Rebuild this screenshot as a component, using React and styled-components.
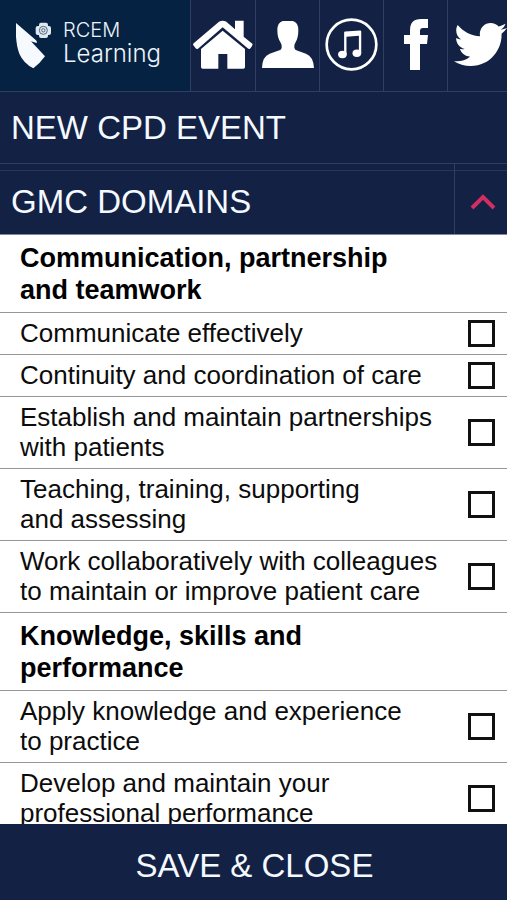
import React, {useState} from 'react';
import styled, {createGlobalStyle} from 'styled-components';
import {FaTwitter} from 'react-icons/fa';

const navy = '#132144';
const line = '#303e62';

const GlobalStyle = createGlobalStyle`
    * {
        box-sizing: border-box;
    }

    body {
        margin: 0;
        font-family: "Liberation Sans", Arial, sans-serif;
        color: #0c0c0c;
        background: #ffffff;
    }
`;

const Page = styled.div`
    display: flex;
    flex-direction: column;
    height: 100vh;
`;

const Header = styled.header`
    display: grid;
    grid-template-columns: 190fr 65fr 64fr 64fr 64fr 60fr;
    flex: none;
    height: 92px;
    background: ${navy};
    border-bottom: 1px solid ${line};
`;

const Logo = styled.a`
    display: flex;
    align-items: flex-start;
    gap: 12px;
    padding: 20px 0 0 16px;
    color: #eef4fa;
    text-decoration: none;
    background: #052242;

    svg {
        flex: none;
        margin-top: 1px;
    }
`;

const LogoText = styled.span`
    display: flex;
    flex-direction: column;
    font-family: Inter, sans-serif;
    font-weight: 300;
`;

const LogoTop = styled.span`
    font-size: 20px;
    line-height: 20px;
`;

const LogoBottom = styled.span`
    font-size: 24px;
    line-height: 28px;
`;

const NavLink = styled.a`
    display: flex;
    align-items: center;
    justify-content: ${(props) => props.$align || 'center'};
    padding-bottom: 3px;
    border-left: 1px solid ${line};
    color: #ffffff;

    svg {
        flex: none;
    }
`;

const PageTitle = styled.h1`
    display: flex;
    align-items: center;
    flex: none;
    height: 72px;
    margin: 0;
    padding-left: 11px;
    font-size: 33px;
    font-weight: 400;
    color: #f4f9ff;
    background: ${navy};
    border-bottom: 1px solid ${line};
`;

const SectionBar = styled.div`
    display: grid;
    grid-template-columns: 1fr 53px;
    flex: none;
    height: 71px;
    color: #f4f9ff;
    background: linear-gradient(#283657, #283657) 0 6px / 100% 1px no-repeat ${navy};
    border-bottom: 1px solid #8088a0;
`;

const SectionTitle = styled.h2`
    align-self: center;
    margin: 0;
    padding: 6px 0 0 11px;
    font-size: 33px;
    font-weight: 400;
`;

const ToggleButton = styled.button`
    display: flex;
    align-items: center;
    justify-content: center;
    padding: 6px 0 0 4px;
    border: 0;
    border-left: 1px solid ${line};
    background: none;
    cursor: pointer;

    svg {
        transform: ${(props) => (props.$open ? 'none' : 'rotate(180deg)')};
    }
`;

const List = styled.main`
    flex: 1;
    min-height: 0;
    overflow-y: auto;
    scrollbar-width: none;
`;

const GroupTitle = styled.h3`
    margin: 0;
    padding: 7px 20px 6px;
    font-size: 27px;
    font-weight: 700;
    line-height: 32px;
    white-space: pre-line;
    color: #000000;
    border-bottom: 1px solid #969696;
`;

const Row = styled.label`
    display: flex;
    align-items: center;
    justify-content: space-between;
    padding: 5px 12px 6px 20px;
    font-size: 26px;
    line-height: 30px;
    white-space: pre-line;
    border-bottom: 1px solid #969696;
`;

const Checkbox = styled.input`
    flex: none;
    appearance: none;
    width: 27px;
    height: 27px;
    margin: 0;
    border: 3px solid #111111;
    background: #ffffff;

    &:checked {
        background: #111111;
        box-shadow: inset 0 0 0 3px #ffffff;
    }
`;

const SaveButton = styled.button`
    flex: none;
    height: 76px;
    padding: 8px 0 0 2px;
    border: 0;
    font-family: inherit;
    font-size: 33px;
    color: #f4f9ff;
    background: ${navy};
    cursor: pointer;
`;

const groups = [
    {
        title: 'Communication, partnership\nand teamwork',
        items: [
            'Communicate effectively',
            'Continuity and coordination of care',
            'Establish and maintain partnerships\nwith patients',
            'Teaching, training, supporting\nand assessing',
            'Work collaboratively with colleagues\nto maintain or improve patient care',
        ],
    },
    {
        title: 'Knowledge, skills and\nperformance',
        items: [
            'Apply knowledge and experience\nto practice',
            'Develop and maintain your\nprofessional performance',
        ],
    },
];

const LogoMark = () => (
    <svg width="35" height="48" viewBox="0 0 105 144" aria-hidden="true">
        <path d="M0 6 L60 58 Q64 62 62 66 L45 61 L87 106 Q72 127 52 142 Q22 126 10 98 Q-3 65 0 6Z" fill="#f6fafe"/>
        <rect x="69" y="5" width="27" height="46" rx="6" fill="#dfe8ef"/>
        <rect x="59" y="15" width="46" height="27" rx="6" fill="#dfe8ef"/>
        <circle cx="82" cy="28" r="12" fill="none" stroke="#52657b" strokeWidth="3"/>
        <circle cx="82" cy="28" r="5" fill="none" stroke="#52657b" strokeWidth="3"/>
    </svg>
);

const HomeIcon = () => (
    <svg width="60" height="49" viewBox="0 0 180 147" fill="currentColor" aria-hidden="true">
        <path d="M2 70 L78 5 Q89 -1 100 5 L126 28 V2 H152 V50 L178 71 Q181 75 171 86 Q168 88 164 85 L89 22 L15 86 Q11 89 8 85 L1 76 Q-1 73 2 70Z"/>
        <path d="M89 32 L156 87 V142 Q156 146 151 146 H103 V102 H76 V146 H29 Q24 146 24 141 V87Z"/>
    </svg>
);

const PersonIcon = () => (
    <svg width="52" height="47" viewBox="0 0 156 141" fill="currentColor" aria-hidden="true">
        <path d="M62 0 H93 Q109 5 109 27 Q109 50 101 63 Q96 71 97 80 Q98 87 107 89 L132 98 Q154 106 156 141 H0 Q1 106 23 98 L48 89 Q58 87 59 80 Q60 71 55 63 Q46 50 46 27 Q46 5 62 0Z"/>
    </svg>
);

const MusicIcon = () => (
    <svg width="53" height="53" viewBox="0 0 158 158" fill="currentColor" aria-hidden="true">
        <circle cx="79" cy="79" r="74" fill="none" stroke="currentColor" strokeWidth="8"/>
        <path d="M57 43 Q57 40 60 40 L105 37 Q108 37 108 40 V104 H101 V53 L64 56 V109 H57Z"/>
        <ellipse cx="52" cy="109" rx="13" ry="11"/>
        <ellipse cx="95" cy="105" rx="13" ry="11"/>
    </svg>
);

const FacebookIcon = () => (
    <svg width="24" height="51" viewBox="0 0 24 51" fill="currentColor" aria-hidden="true">
        <path d="M24 0 V9 H19 Q16 9 16 12 V16 H24 L23 25 H16 V51 H6 V25 H0 V16 H6 V11 Q6 0 17 0Z"/>
    </svg>
);

const ChevronIcon = () => (
    <svg width="26" height="18" viewBox="0 0 26 18" aria-hidden="true">
        <path d="M2 15 L13 4 L24 15" fill="none" stroke="#d02f62" strokeWidth="4"/>
    </svg>
);

const App = () => {
    const [open, setOpen] = useState(true);

    return (
        <Page>
            <GlobalStyle/>
            <Header>
                <Logo href="#">
                    <LogoMark/>
                    <LogoText>
                        <LogoTop>RCEM</LogoTop>
                        <LogoBottom>Learning</LogoBottom>
                    </LogoText>
                </Logo>
                <NavLink href="#home" aria-label="Home"><HomeIcon/></NavLink>
                <NavLink href="#profile" aria-label="Profile"><PersonIcon/></NavLink>
                <NavLink href="#podcasts" aria-label="Podcasts"><MusicIcon/></NavLink>
                <NavLink href="#facebook" aria-label="Facebook"><FacebookIcon/></NavLink>
                <NavLink href="#twitter" aria-label="Twitter" $align="flex-end"><FaTwitter size={53}/></NavLink>
            </Header>
            <PageTitle>NEW CPD EVENT</PageTitle>
            <SectionBar>
                <SectionTitle>GMC DOMAINS</SectionTitle>
                <ToggleButton
                    type="button"
                    aria-label="Toggle GMC domains"
                    aria-expanded={open}
                    $open={open}
                    onClick={() => setOpen(!open)}
                >
                    <ChevronIcon/>
                </ToggleButton>
            </SectionBar>
            <List>
                {open && groups.map((group) => (
                    <section key={group.title}>
                        <GroupTitle>{group.title}</GroupTitle>
                        {group.items.map((item) => (
                            <Row key={item}>
                                <span>{item}</span>
                                <Checkbox type="checkbox"/>
                            </Row>
                        ))}
                    </section>
                ))}
            </List>
            <SaveButton type="button">SAVE &amp; CLOSE</SaveButton>
        </Page>
    );
};

export default App;
